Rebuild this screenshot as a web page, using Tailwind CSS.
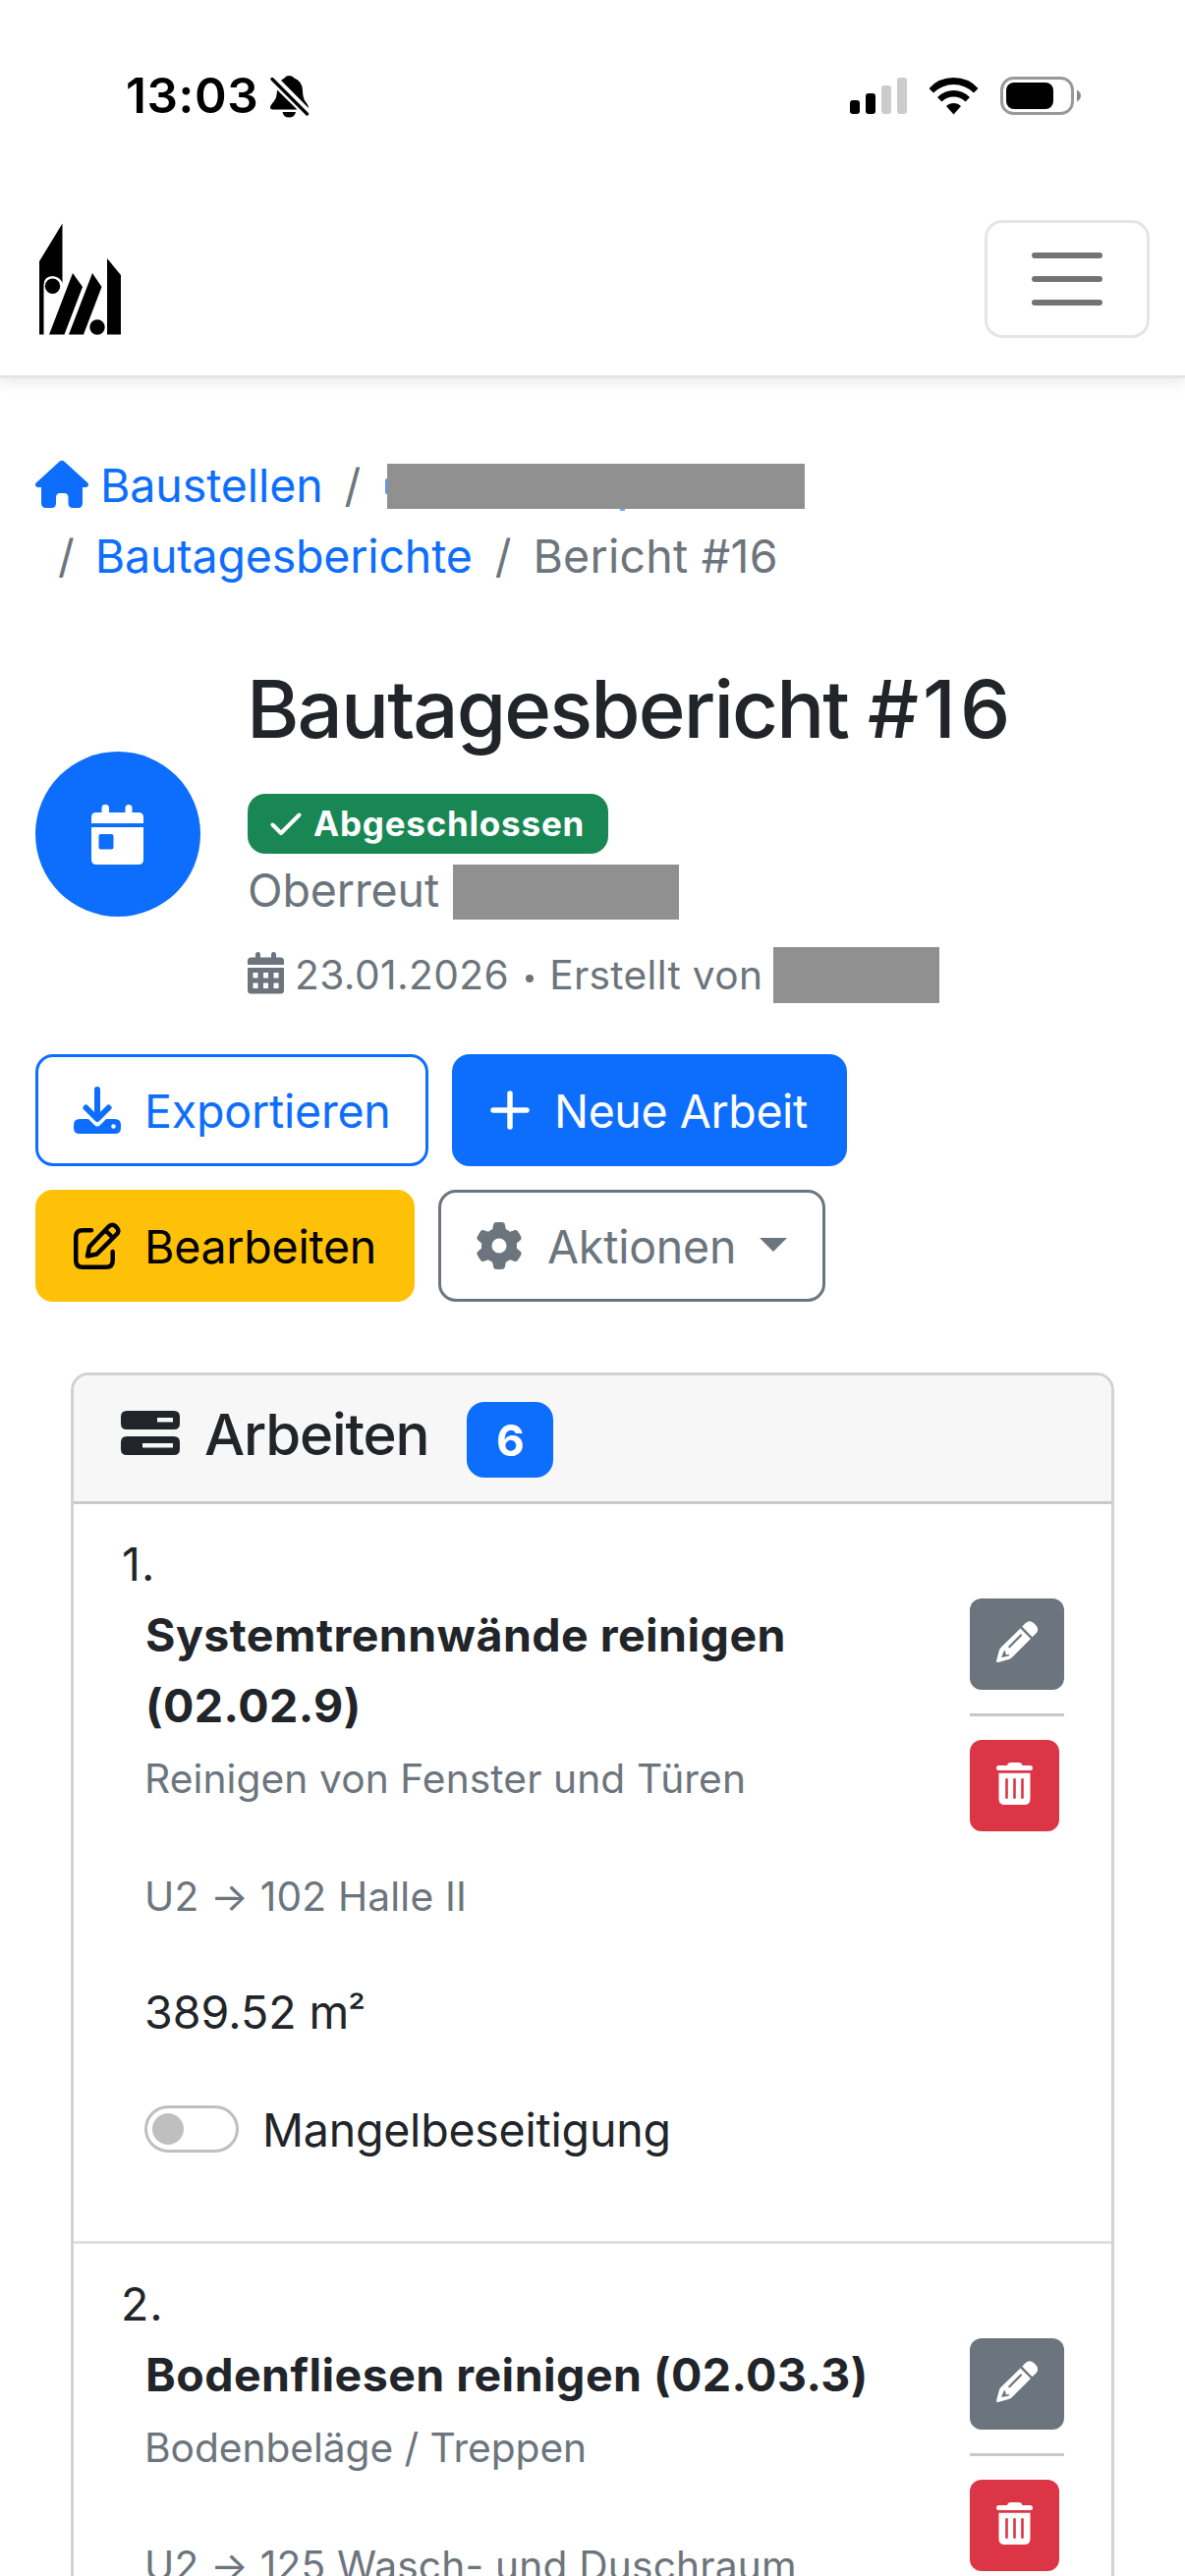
<!DOCTYPE html>
<html lang="de">
<head>
<meta charset="utf-8">
<title>Bautagesbericht #16</title>
<script src="https://cdn.jsdelivr.net/npm/@tailwindcss/browser@4"></script>
</head>
<body class="bg-white">
<svg class="hidden">
  <symbol id="pencil" viewBox="0 0 42 42">
    <path fill="#fff" d="M24.500 7.500 35 18 16 37Q14.500 38.400 12.500 39L2 42Q-.2 42.400 0.200 40L2.800 30Q3.300 28 5 26.500ZM26.300 5.700 29.500 2.200Q34-2 38.500 2.500L39.800 3.800Q44.500 8.500 40 13L36.500 16.300Z"/>
    <path fill="#6c757d" d="M8 30Q9 29.500 9.300 32L10 34.500 12.500 34Q14 34.500 12 35.800L5 37Z"/>
    <path stroke="#6c757d" stroke-width="2.200" stroke-linecap="round" d="M25 14.500 13.300 26.300"/>
  </symbol>
  <symbol id="trash" viewBox="0 0 38 43">
    <path fill="#fff" d="M2.500 3H11Q11.500 0 15 0H22.500Q26 0 26.500 3H34.500A2.500 2.500 0 0 1 34.500 8H2.500A2.500 2.500 0 0 1 2.500 3ZM2.500 10.700H34.500V37Q34.500 43 28.500 43H8.500Q2.500 43 2.500 37Z"/>
    <path stroke="#dc3545" stroke-width="2.600" stroke-linecap="round" d="M10.500 17.300V35.700M18.500 17.300V35.700M26.500 17.300V35.700"/>
  </symbol>
</svg>
<div class="flex h-[2622px] w-[1206px] flex-col overflow-hidden bg-white font-[Inter,sans-serif] text-[46.5px] leading-[72px] text-[#212529]">

  <!-- status bar -->
  <div class="relative z-10 flex h-[172px] shrink-0 items-start justify-between bg-white pr-[106px] pl-[128px] pt-[77px]">
    <div class="flex items-start gap-3">
      <span class="mt-[-10px] text-[49.5px] leading-[60px] font-semibold tracking-[0.6px] text-black">13:03</span>
      <svg class="h-[43px] w-[40px]" viewBox="0 0 40 43">
        <path d="M11.500 4.500Q14 2.500 15 2Q16 0 19.500 0T24.500 2.500Q32.500 5.500 33 15Q33 22 35.500 26Q39 30 39 33L11 4.700ZM7 14.500 27.500 34.500H2.500Q0 34.500 0 32Q0 30.500 3.500 26.500Q7 22.500 7 14.500ZM12.500 37H26Q25 42.500 19.200 42.500T12.500 37Z"/>
        <path stroke="#000" stroke-width="3.200" stroke-linecap="round" d="M2 3.500 37.500 39"/>
      </svg>
    </div>
    <div class="flex items-start">
      <svg class="h-[42px] w-[236px]" viewBox="0 0 236 42">
        <g fill="#000"><rect x="1" y="25" width="10" height="14" rx="3"/><rect x="17" y="18" width="10" height="21" rx="3"/></g>
        <g fill="#ccc"><rect x="33" y="10" width="10" height="29" rx="3"/><rect x="49" y="2" width="10" height="37" rx="3"/></g>
        <path d="M81.500 13Q91 2 106.500 2T131.500 13L127 17.500Q118 9 106.500 9T86 17.500ZM90 22Q97 15 106.500 15T123 22L118.500 26.500Q113.500 21.500 106.500 21.500T94.500 26.500ZM99 31Q102 28 106.500 28T114 31L106.500 39.500Z"/>
        <rect x="155.500" y="2.500" width="72" height="36" rx="12" fill="none" stroke="#999" stroke-width="3"/>
        <rect x="160" y="7" width="48" height="27" rx="8"/>
        <path fill="#888" d="M232 14.500Q236 17 236 20.500T232 26.500Z"/>
      </svg>
    </div>
  </div>

  <!-- navbar -->
  <nav class="flex h-[213px] shrink-0 items-start justify-between border-b-3 border-[#e5e5e5] px-9 pt-[52px] shadow-[0_6px_12px_rgba(0,0,0,0.075)]">
    <svg class="mt-[2px] ml-[3px] h-[116px] w-[86px]" viewBox="0 0 86 116">
      <path d="M1 40 24.500 1.500V62Q22 55.500 14.500 55Q5.500 55.500 5.500 64V114.500H1ZM35 52 45 66 26.500 114.500H11ZM55 52 64.500 66 46 114.500H31ZM70 37 84 54V114.500H70Z"/>
      <circle cx="14.500" cy="65.200" r="7.700"/><circle cx="60" cy="107" r="7.700"/>
    </svg>
    <button class="flex h-[120px] w-[168px] flex-col items-center justify-center gap-[18px] rounded-[18px] border-3 border-[#e5e5e5]">
      <span class="h-[6px] w-[72px] rounded-full bg-[#737373]"></span>
      <span class="h-[6px] w-[72px] rounded-full bg-[#737373]"></span>
      <span class="h-[6px] w-[72px] rounded-full bg-[#737373]"></span>
    </button>
  </nav>

  <!-- breadcrumb -->
  <div class="mt-[73px] px-9 whitespace-nowrap text-[#6c757d]">
    <div class="flex h-[72px]">
      <svg class="mt-[10px] mr-3 h-[50px] w-[54px]" viewBox="0 0 54 50"><path fill="#0d6efd" d="M24.500 1.800Q27-.5 29.500 1.800L53 23.300Q55 25.500 53.300 27Q53 28 51 28H48V44Q48 49 43.500 49H38Q33.500 49 33.500 44V38.500Q33.500 34 29.500 34H25Q21 34 21 38.500V44Q21 49 16.500 49H11Q6 49 6 44V28H3Q1 28 .6 27Q-1 25.500 1 23.300Z"/></svg>
      <span class="tracking-[-0.1px] text-[#0d6efd]">Baustellen</span>
      <span class="ml-[22px]">/</span>
      <div class="relative mt-[14px] ml-[27px] h-[46px] w-[425px] bg-[#909090]">
        <span class="absolute top-[15px] left-[-2px] h-[16px] w-[2px] rounded-l-full bg-[#0d6efd]/70"></span>
        <span class="absolute top-[46px] left-[237px] h-[2px] w-[5px] bg-[#0d6efd]/60"></span>
      </div>
    </div>
    <div class="flex h-[72px] pl-[23px]">
      <span>/</span>
      <span class="ml-[21px] tracking-[-0.18px] text-[#0d6efd]">Bautagesberichte</span>
      <span class="ml-[23px]">/</span>
      <span class="ml-[22px] tracking-[0.25px]">Bericht #16</span>
    </div>
  </div>

  <!-- page heading -->
  <header class="mt-[69px] flex items-center gap-12 px-9 whitespace-nowrap">
    <div class="flex size-[168px] items-center justify-center rounded-full bg-[#0d6efd]">
      <svg class="mr-[2px] h-[61px] w-[53px]" viewBox="0 0 53 61"><path fill="#fff" fill-rule="evenodd" d="M5 8H10.500V3.500A3.500 3.500 0 0 1 18 3.500V8H34.500V3.500A3.500 3.500 0 0 1 41.500 3.500V8H48Q53 8 53 13V19H0V13Q0 8 5 8ZM0 23H53V56Q53 61 48 61H5Q0 61 0 56ZM9.500 30Q7.500 30 7.500 32V43.500Q7.500 45.500 9.500 45.500H20.500Q22.500 45.500 22.500 43.500V32Q22.500 30 20.500 30Z"/></svg>
    </div>
    <div class="flex flex-col items-start pb-[3px]">
      <h1 class="ml-[-1px] text-[81.5px] leading-[101px] font-medium tracking-[-1.9px]">Bautagesbericht <span class="tracking-[4px]">#16</span></h1>
      <div class="mt-9 flex h-[61px] items-center rounded-[18px] bg-[#198754] pr-[24px] pl-[23px] text-[35px] font-bold tracking-[0.78px] text-white">
        <svg class="mr-3 h-[24px] w-[32px]" viewBox="0 0 32 24"><path fill="none" stroke="#fff" stroke-width="4" stroke-linecap="round" stroke-linejoin="round" d="M2.500 12.500 11 21 29.500 2.500"/></svg><span class="pb-[2px]">Abgeschlossen</span>
      </div>
      <div class="mt-px flex h-[72px] text-[#6c757d]">
        <span class="tracking-[-0.1px]">Oberreut</span>
        <span class="mt-[10px] ml-[14px] h-[56px] w-[230px] bg-[#909090]"></span>
      </div>
      <div class="mt-[19px] flex h-[63px] text-[40.7px] leading-[63px] text-[#6c757d]">
        <svg class="mt-[8px] mr-[11px] h-[43px] w-[37px]" viewBox="0 0 37 43"><path fill="#6c757d" fill-rule="evenodd" d="M3.500 5.500H8V2.500A2.500 2.500 0 0 1 13 2.500V5.500H24V2.500A2.500 2.500 0 0 1 29 2.500V5.500H33.500Q37 5.500 37 9V13H0V9Q0 5.500 3.500 5.500ZM0 16H37V39Q37 42.500 33.500 42.500H3.500Q0 42.500 0 39ZM5.500 21V26.500H10.500V21ZM16 21V26.500H21V21ZM26.500 21V26.500H31.500V21ZM5.500 31.500V37H10.500V31.500ZM16 31.500V37H21V31.500ZM26.500 31.500V37H31.500V31.500Z"/></svg>
        <span class="tracking-[0.4px]">23.01.2026</span>
        <span class="mt-[31px] ml-[17px] size-[8px] rounded-full bg-[#6c757d]"></span>
        <span class="ml-[16px] tracking-[0.3px]">Erstellt von</span>
        <span class="mt-[3px] ml-[11px] h-[57px] w-[169px] bg-[#909090]"></span>
      </div>
    </div>
  </header>

  <!-- actions -->
  <div class="mt-[46px] flex flex-col gap-6 px-9 whitespace-nowrap">
    <div class="flex gap-6">
      <button class="flex h-[114px] w-[400px] items-center rounded-[18px] border-3 border-[#0d6efd] pl-9 text-[#0d6efd]">
        <svg class="h-[48px] w-[48px]" viewBox="0 0 48 48"><path fill="#0d6efd" fill-rule="evenodd" d="M6 33H15L21 39Q24 42 27 39L33 33H42Q48 33 48 39V42Q48 48 42 48H6Q0 48 0 42V39Q0 33 6 33ZM40.500 38.200A2.300 2.300 0 1 0 40.500 42.800A2.300 2.300 0 1 0 40.500 38.200Z"/><path fill="none" stroke="#0d6efd" stroke-width="6" stroke-linecap="round" stroke-linejoin="round" d="M24 3V32M12.500 21.500 24 33 35.500 21.500"/></svg>
        <span class="ml-6 pt-[2px] tracking-[-0.2px]">Exportieren</span>
      </button>
      <button class="flex h-[114px] w-[402px] items-center rounded-[18px] bg-[#0d6efd] pl-[39px] text-white">
        <svg class="h-[40px] w-[40px]" viewBox="0 0 40 40"><path stroke="#fff" stroke-width="5.500" stroke-linecap="round" d="M20 3V37M3 20H37"/></svg>
        <span class="ml-[25px] pt-[2px] tracking-[-0.4px]">Neue Arbeit</span>
      </button>
    </div>
    <div class="flex gap-6">
      <button class="flex h-[114px] w-[386px] items-center rounded-[18px] bg-[#ffc107] pl-[39px] text-black">
        <svg class="h-[48px] w-[48px]" viewBox="0 0 48 48" fill="none" stroke="#000" stroke-width="4.500" stroke-linecap="round" stroke-linejoin="round"><path d="M18 8.300H9Q2.250 8.300 2.250 15V39Q2.250 45.750 9 45.750H33Q39.700 45.750 39.700 39V30"/><path d="M16 25 35.500 4.500Q39 1 43 4.500Q47.500 9 43.500 12.500L23.500 32.500 14 34.500ZM32.500 8.500 39.500 15.500"/></svg>
        <span class="ml-6 pt-[2px] tracking-[-0.25px]">Bearbeiten</span>
      </button>
      <button class="flex h-[114px] w-[394px] items-center rounded-[18px] border-3 border-[#6c757d] pl-[35px] text-[#6c757d]">
        <svg class="h-[48px] w-[48px]" viewBox="0 0 512 512"><path fill="#6c757d" d="M495.900 166.600c3.200 8.700 .5 18.400-6.400 24.600l-43.300 39.400c1.100 8.300 1.700 16.800 1.700 25.400s-.6 17.100-1.700 25.400l43.300 39.400c6.900 6.200 9.600 15.900 6.400 24.600c-4.400 11.900-9.700 23.300-15.800 34.300l-4.700 8.100c-6.600 11-14 21.400-22.100 31.200c-5.900 7.200-15.700 9.600-24.500 6.800l-55.700-17.700c-13.400 10.300-28.200 18.900-44 25.400l-12.500 57.100c-2 9.100-9 16.300-18.200 17.800c-13.800 2.300-28 3.500-42.500 3.500s-28.700-1.200-42.500-3.500c-9.200-1.500-16.200-8.700-18.200-17.800l-12.500-57.100c-15.800-6.500-30.600-15.100-44-25.400L83.100 425.900c-8.800 2.800-18.600 .3-24.500-6.800c-8.100-9.800-15.500-20.200-22.100-31.200l-4.700-8.100c-6.100-11-11.400-22.400-15.800-34.300c-3.200-8.700-.5-18.400 6.400-24.600l43.300-39.400C64.600 273.100 64 264.600 64 256s.6-17.100 1.700-25.400L22.400 191.200c-6.900-6.200-9.600-15.900-6.400-24.600c4.400-11.900 9.700-23.300 15.800-34.300l4.700-8.100c6.600-11 14-21.400 22.100-31.200c5.900-7.200 15.700-9.600 24.500-6.800l55.700 17.700c13.400-10.300 28.200-18.900 44-25.400l12.500-57.100c2-9.100 9-16.300 18.200-17.800C227.300 1.200 241.500 0 256 0s28.700 1.200 42.500 3.500c9.200 1.500 16.200 8.700 18.200 17.800l12.500 57.100c15.800 6.500 30.600 15.100 44 25.400l55.700-17.700c8.800-2.800 18.600-.3 24.500 6.800c8.100 9.800 15.500 20.200 22.100 31.200l4.700 8.100c6.100 11 11.400 22.400 15.800 34.300zM256 336a80 80 0 1 0 0-160 80 80 0 1 0 0 160z"/></svg>
        <span class="ml-[25px] pt-[2px] tracking-[-0.22px]">Aktionen</span>
        <svg class="mt-[-2px] ml-[24px] h-[14px] w-[28px]" viewBox="0 0 28 14"><path fill="#6c757d" d="M0 0H28L14 14Z"/></svg>
      </button>
    </div>
  </div>

  <!-- tasks -->
  <section class="mx-[72px] mt-[72px] w-[1062px] shrink-0 rounded-[18px] border-3 border-[#d2d2d2] whitespace-nowrap">
    <div class="flex h-[131px] items-start rounded-t-[15px] border-b-3 border-[#cacaca] bg-[#f7f7f7] pt-[27px] pl-12">
      <svg class="mt-[9px] h-[45px] w-[60px]" viewBox="0 0 60 45"><path fill="#212529" fill-rule="evenodd" d="M6 0H54Q60 0 60 6V13Q60 19 54 19H6Q0 19 0 13V6Q0 0 6 0ZM37 7V11.500H53V7ZM6 26H54Q60 26 60 32V39Q60 45 54 45H6Q0 45 0 39V32Q0 26 6 26ZM22 33V37.500H53V33Z"/></svg>
      <h2 class="mt-[-2px] ml-[25px] text-[58.2px] leading-[70px] font-medium tracking-[-1.2px]">Arbeiten</h2>
      <span class="ml-[39px] flex h-[77px] w-[88px] items-center justify-center rounded-[18px] bg-[#0d6efd] text-[44px] font-bold text-white">6</span>
    </div>

    <article class="flex justify-between border-b-3 border-[#dfdfdf] pt-[25px] pr-12 pb-[77px] pl-12">
      <div>
        <div class="pl-px tracking-[1px]">1.</div>
        <div class="pl-6">
          <h3 class="ml-px font-bold tracking-[0.45px]">Systemtrennwände reinigen<br>(02.02.9)</h3>
          <p class="mt-[7px] text-[40.7px] leading-[63px] tracking-[0.09px] text-[#6c757d]">Reinigen von Fenster und Türen</p>
          <p class="mt-[57px] text-[40.7px] leading-[63px] tracking-[0.18px] text-[#6c757d]">U2 → 102 Halle II</p>
          <p class="mt-[50px] flex h-[72px]"><span class="whitespace-pre">389.52 </span><span class="tracking-[-1px]">m</span><span class="text-[40px]">²</span></p>
          <label class="mt-12 flex h-[72px] items-start">
            <span class="mt-[11px] flex h-12 w-24 items-center rounded-full border-3 border-[#bfbfbf] pl-[5px]"><span class="size-8 rounded-full bg-[#bfbfbf]"></span></span>
            <span class="ml-[24px] tracking-[-0.22px]">Mangelbeseitigung</span>
          </label>
        </div>
      </div>
      <div class="flex w-24 flex-col items-start pt-[71px]">
        <button class="flex h-[93px] w-24 items-center justify-center rounded-xl bg-[#6c757d]"><svg class="mb-[5px] h-[42px] w-[42px] overflow-visible"><use href="#pencil"/></svg></button>
        <hr class="my-6 w-24 border-t-3 border-[#c8c8c8]">
        <button class="flex h-[93px] w-[91px] items-center justify-center rounded-xl bg-[#dc3545]"><svg class="mb-[4px] h-[43px] w-[38px]"><use href="#trash"/></svg></button>
      </div>
    </article>

    <article class="flex justify-between pt-[25px] pr-12 pb-[77px] pl-12">
      <div>
        <div class="tracking-[1px]">2.</div>
        <div class="pl-6">
          <h3 class="ml-px font-bold tracking-[0.45px]">Bodenfliesen reinigen (02.03.3)</h3>
          <p class="mt-[7px] text-[40.7px] leading-[63px] tracking-[-0.05px] text-[#6c757d]">Bodenbeläge / Treppen</p>
          <p class="mt-[57px] text-[40.7px] leading-[63px] tracking-[0.18px] text-[#6c757d]">U2 → 125 Wasch- und Duschraum</p>
        </div>
      </div>
      <div class="flex w-24 flex-col items-start pt-[71px]">
        <button class="flex h-[93px] w-24 items-center justify-center rounded-xl bg-[#6c757d]"><svg class="mb-[5px] h-[42px] w-[42px] overflow-visible"><use href="#pencil"/></svg></button>
        <hr class="my-6 w-24 border-t-3 border-[#c8c8c8]">
        <button class="flex h-[93px] w-[91px] items-center justify-center rounded-xl bg-[#dc3545]"><svg class="mb-[4px] h-[43px] w-[38px]"><use href="#trash"/></svg></button>
      </div>
    </article>
  </section>
</div>
</body>
</html>
